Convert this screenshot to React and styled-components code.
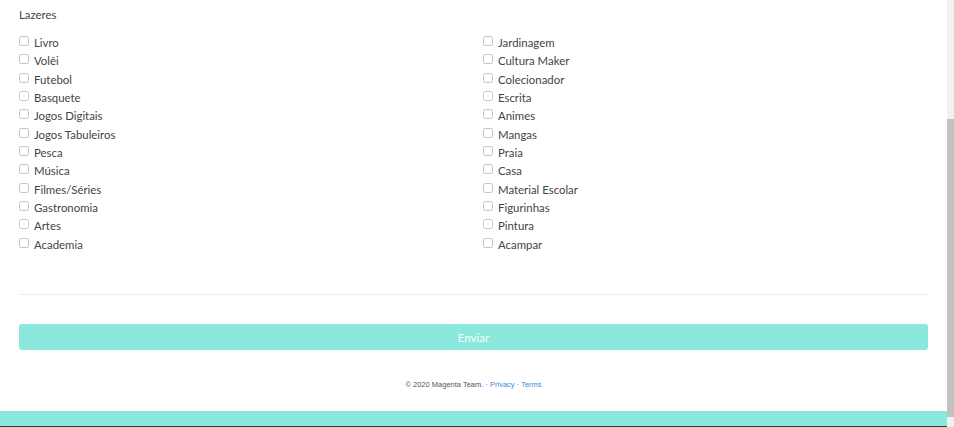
import React from 'react';
import styled, { createGlobalStyle } from 'styled-components';

const GlobalStyle = createGlobalStyle`
  html, body {
    margin: 0;
    padding: 0;
    overflow: hidden;
    background: #fff;
  }
`;

const Screen = styled.div`
  display: flex;
  width: 954px;
  height: 427px;
  overflow: hidden;
`;

const Page = styled.div`
  flex: 1;
  display: flex;
  flex-direction: column;
  font-family: Lato, "Open Sans", sans-serif;
  color: #444;
`;

const Form = styled.form`
  padding: 7px 19px 0 19px;
`;

const Label = styled.div`
  font-size: 11.4px;
  line-height: 16px;
  color: #444;
  margin-bottom: 13px;
`;

const Columns = styled.div`
  display: grid;
  grid-template-columns: 464px 1fr;
`;

const Column = styled.div`
  display: flex;
  flex-direction: column;
`;

const Option = styled.label`
  display: flex;
  align-items: flex-start;
  height: 18.35px;
  font-size: 11.4px;
  line-height: 14px;
  color: #444;
`;

const Box = styled.span`
  box-sizing: border-box;
  width: 10px;
  height: 10px;
  margin-top: 0px;
  margin-right: 5px;
  border: 1px solid #c4c4c4;
  border-radius: 2.5px;
  background: #fff;
`;

const Divider = styled.hr`
  border: 0;
  border-top: 1px solid #ececec;
  margin: 38px 0 29px 0;
`;

const Submit = styled.button`
  width: 100%;
  height: 26px;
  border: 0;
  border-radius: 3px;
  background: #8ae8dc;
  color: #f4fffd;
  font-family: Lato, "Open Sans", sans-serif;
  font-size: 11.6px;
  padding: 0;
`;

const Footer = styled.div`
  text-align: center;
  font-family: "Liberation Sans", Arial, sans-serif;
  font-size: 7.5px;
  color: #555;
  margin-top: 30px;
  height: 32px;
  a {
    color: #3d8be0;
    text-decoration: none;
  }
`;

const BottomBar = styled.div`
  height: 15px;
  background: #8ae8dc;
  border-bottom: 1px solid #2f3a1e;
`;

const Scrollbar = styled.div`
  width: 7px;
  background: #f1f1f1;
  display: flex;
  flex-direction: column;
  padding-top: 119px;
`;

const Thumb = styled.div`
  flex: 1;
  background: #c1c1c1;
  margin-bottom: 10px;
`;

const left = ['Livro', 'Volêi', 'Futebol', 'Basquete', 'Jogos Digitais', 'Jogos Tabuleiros', 'Pesca', 'Música', 'Filmes/Séries', 'Gastronomia', 'Artes', 'Academia'];
const right = ['Jardinagem', 'Cultura Maker', 'Colecionador', 'Escrita', 'Animes', 'Mangas', 'Praia', 'Casa', 'Material Escolar', 'Figurinhas', 'Pintura', 'Acampar'];

const App = () => (
  <Screen>
    <GlobalStyle />
    <Page>
      <Form onSubmit={(e) => e.preventDefault()}>
        <Label>Lazeres</Label>
        <Columns>
          {[left, right].map((col, i) => (
            <Column key={i}>
              {col.map((name) => (
                <Option key={name}>
                  <Box />
                  {name}
                </Option>
              ))}
            </Column>
          ))}
        </Columns>
        <Divider />
        <Submit type="submit">Enviar</Submit>
      </Form>
      <Footer>
        © 2020 Magenta Team. · <a href="#">Privacy</a> · <a href="#">Terms</a>
      </Footer>
      <BottomBar />
    </Page>
    <Scrollbar>
      <Thumb />
    </Scrollbar>
  </Screen>
);

export default App;
